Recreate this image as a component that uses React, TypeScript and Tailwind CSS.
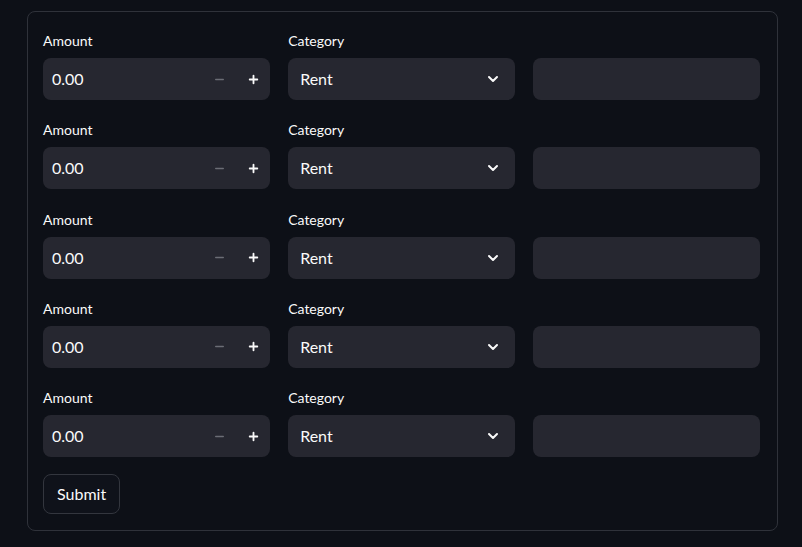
import React from 'react';
import { ChevronDown, Minus, Plus } from 'lucide-react';

const ROWS = [0, 1, 2, 3, 4];

function Label({ text }: { text: string }) {
  return (
    <div className="h-[26px] mb-[4px] flex items-center text-[14px] text-[#fafafa] leading-none">
      {text}
    </div>
  );
}

function NumberField() {
  return (
    <div>
      <Label text="Amount" />
      <div className="h-[42px] rounded-[8px] bg-[#262730] flex items-center">
        <span className="flex-1 pl-[9px] text-[16px] text-[#fafafa]">0.00</span>
        <button className="w-[36px] h-full flex items-center justify-center text-[#6b6d75]">
          <Minus size={13} strokeWidth={2.5} />
        </button>
        <button className="w-[32px] h-full flex items-center justify-center text-[#fafafa]">
          <Plus size={13} strokeWidth={3.4} />
        </button>
      </div>
    </div>
  );
}

function SelectField() {
  return (
    <div>
      <Label text="Category" />
      <div className="h-[42px] rounded-[8px] bg-[#262730] flex items-center justify-between pl-[12px] pr-[14px]">
        <span className="text-[16px] text-[#fafafa]">Rent</span>
        <ChevronDown size={16} strokeWidth={3} className="text-[#fafafa]" />
      </div>
    </div>
  );
}

function TextField() {
  return (
    <div>
      <div className="h-[26px] mb-[4px]" />
      <div className="h-[42px] rounded-[8px] bg-[#262730]" />
    </div>
  );
}

export default function App() {
  return (
    <div
      className="w-[802px] h-[547px] bg-[#0d1017] overflow-hidden pt-[11px]"
      style={{ fontFamily: 'Lato, "Noto Sans", sans-serif' }}
    >
      <div className="ml-[27px] w-[751px] border border-[#2f323a] rounded-[8px] pl-[15px] pr-[17px] pt-[16px] pb-[16px] flex flex-col gap-[17.25px]">
        {ROWS.map((r) => (
          <div key={r} className="grid grid-cols-3 gap-x-[18.5px]">
            <NumberField />
            <SelectField />
            <TextField />
          </div>
        ))}
        <div>
          <button className="h-[40px] px-[13px] rounded-[8px] border border-[#33363e] bg-[#0f121a] text-[16px] text-[#fafafa]">
            Submit
          </button>
        </div>
      </div>
    </div>
  );
}
